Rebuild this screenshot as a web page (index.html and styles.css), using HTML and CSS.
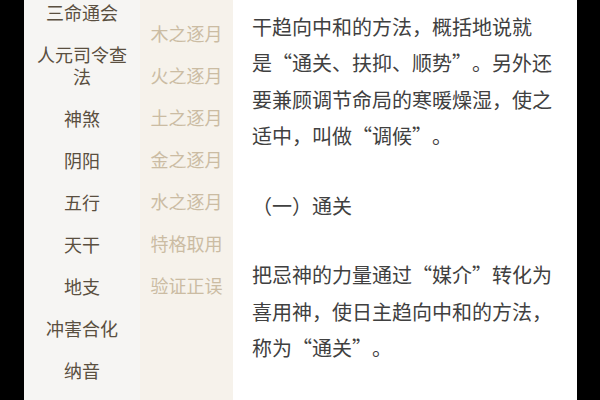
FILE: index.html
```html
<!DOCTYPE html>
<html lang="zh-CN">
<head>
<meta charset="utf-8">
<link rel="stylesheet" href="styles.css">
</head>
<body>
<div class="screen">
  <div class="edge"></div>
  <nav class="cat">
    <div class="cat-item">三命通会</div>
    <div class="cat-item">人元司令查法</div>
    <div class="cat-item">神煞</div>
    <div class="cat-item">阴阳</div>
    <div class="cat-item">五行</div>
    <div class="cat-item">天干</div>
    <div class="cat-item">地支</div>
    <div class="cat-item">冲害合化</div>
    <div class="cat-item">纳音</div>
  </nav>
  <nav class="sub">
    <div class="sub-item">木之逐月</div>
    <div class="sub-item">火之逐月</div>
    <div class="sub-item">土之逐月</div>
    <div class="sub-item">金之逐月</div>
    <div class="sub-item">水之逐月</div>
    <div class="sub-item">特格取用</div>
    <div class="sub-item">验证正误</div>
  </nav>
  <main class="content">
    <p class="para">干趋向中和的方法，概括地说就<br>是<span class="ql">“</span>通关、扶抑、顺势<span class="qr">”</span>。另外还<br>要兼顾调节命局的寒暖燥湿，使之<br>适中，叫做<span class="ql">“</span>调候<span class="qr">”</span>。</p>
    <p class="para">（一）通关</p>
    <p class="para">把忌神的力量通过<span class="ql">“</span>媒介<span class="qr">”</span>转化为<br>喜用神，使日主趋向中和的方法，<br>称为<span class="ql">“</span>通关<span class="qr">”</span>。</p>
  </main>
  <div class="edge edge-right"></div>
</div>
</body>
</html>
```

FILE: styles.css
```css
html, body {
  margin: 0;
  padding: 0;
  background: #000;
}
.screen {
  display: flex;
  width: 600px;
  height: 400px;
  overflow: hidden;
  font-family: "Noto Sans CJK SC", "Noto Sans", sans-serif;
}
.edge {
  width: 24px;
  flex: none;
  background: #000;
}
.edge-right {
  width: 23px;
}
.cat {
  width: 116px;
  flex: none;
  background: #f6f5f3;
}
.cat-item {
  padding: 10px 10px;
  text-align: center;
  font-size: 18px;
  line-height: 22px;
  color: #5a4f40;
}
.cat-item:first-child {
  margin-top: -9px;
}
.sub {
  width: 93px;
  flex: none;
  background: #f6f2eb;
  padding-top: 12px;
}
.sub-item {
  padding: 9px 0;
  text-align: center;
  font-size: 18px;
  line-height: 24px;
  color: #cbbca3;
}
.content {
  width: 344px;
  flex: none;
  background: #fff;
  padding: 0 20px 0 19px;
  box-sizing: border-box;
}
.para {
  margin: 0 0 33px;
  font-size: 20px;
  line-height: 36.5px;
  color: #404040;
  white-space: nowrap;
  text-spacing-trim: space-all;
}
.para:first-child {
  margin-top: 8.5px;
}
.ql, .qr {
  display: inline-block;
  width: 1em;
}
.ql {
  text-align: right;
}
.qr {
  text-align: left;
}
```
